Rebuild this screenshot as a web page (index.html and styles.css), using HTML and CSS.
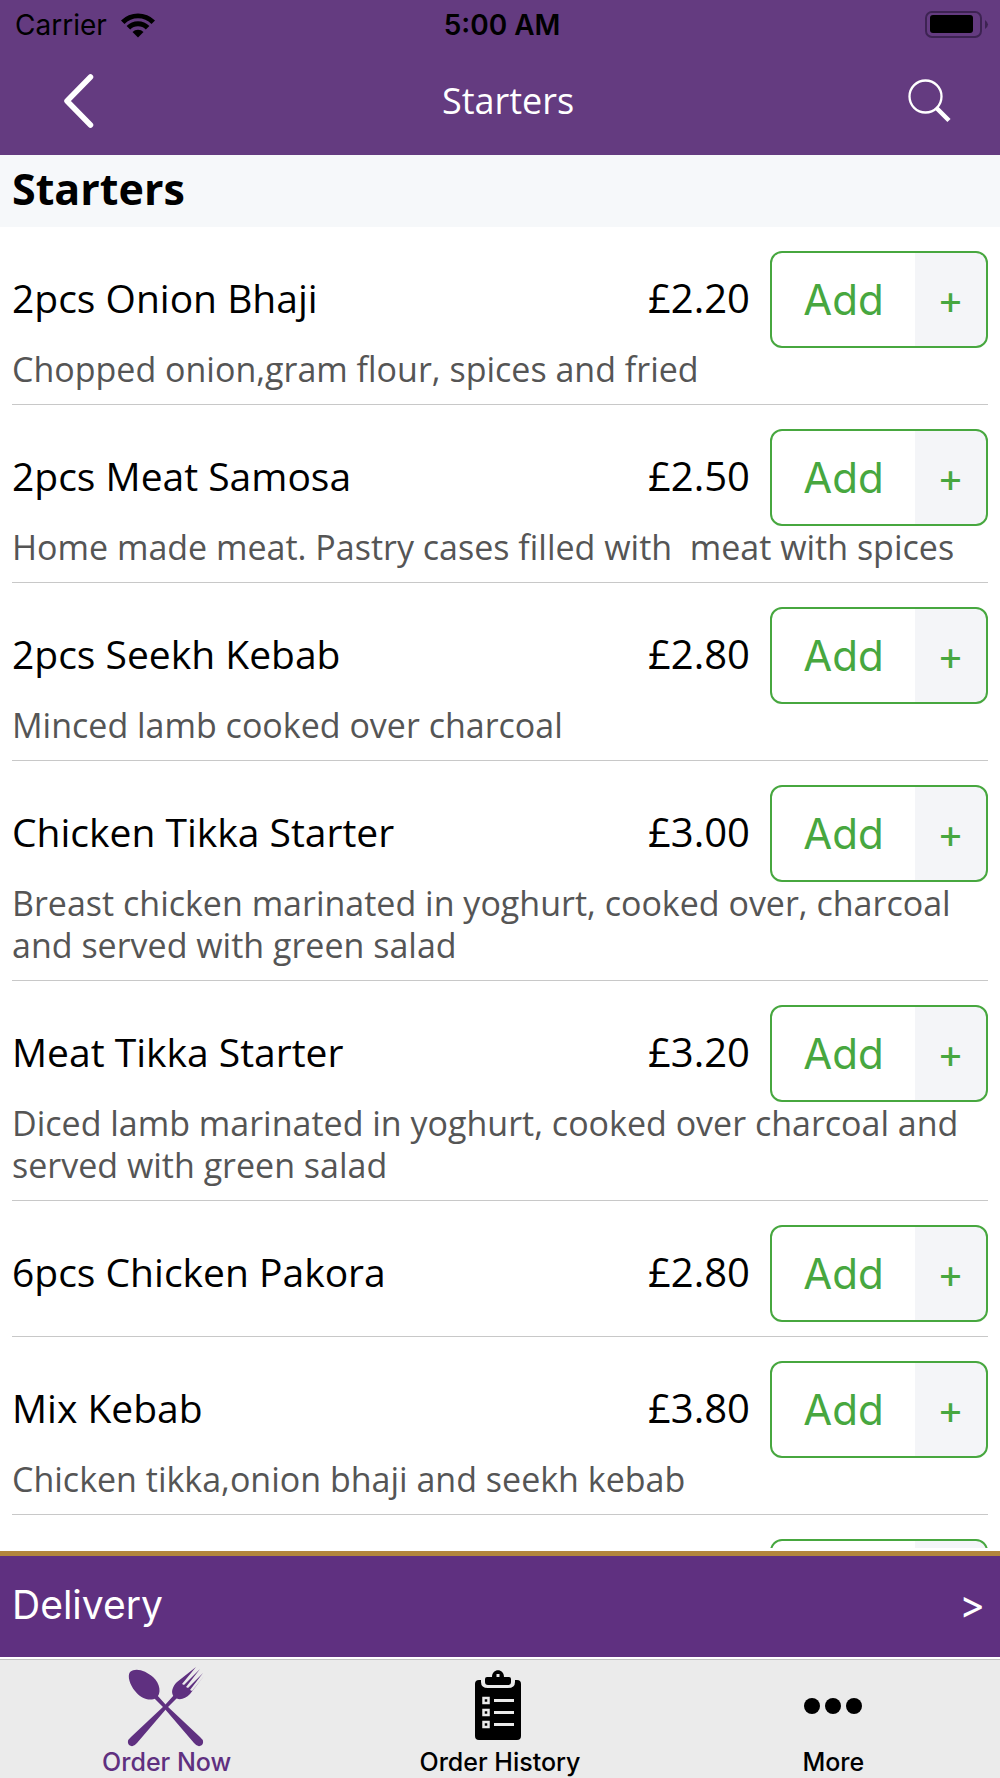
FILE: index.html
```
<!DOCTYPE html>
<html lang="en">
<head>
    <meta charset="UTF-8">
    <meta name="viewport" content="width=device-width, initial-scale=1.0">
    <title>Starters</title>
    <link rel="stylesheet" href="styles.css">
</head>
<body>
    <header class="header">
        <div class="status-bar">
            <div class="status-left">
                <span>Carrier</span>
                <svg class="wifi" viewBox="0 0 34 25">
                    <path d="M0 7.500A24 24 0 0 1 34 7.500L30.500 11A19 19 0 0 0 3.500 11Z"/>
                    <path d="M5.600 13A16.200 16.200 0 0 1 28.400 13L24.800 16.600A11 11 0 0 0 9.200 16.600Z"/>
                    <path d="M11.500 19A7.800 7.800 0 0 1 22.500 19L17 24.500Z"/>
                </svg>
            </div>
            <div class="status-time">5:00 AM</div>
            <div class="status-right">
                <svg class="battery" viewBox="0 0 64 28">
                    <rect x="1" y="1" width="55" height="25" rx="6" fill="none" stroke="#3d2352" stroke-width="2"/>
                    <rect x="5" y="4" width="43" height="18" rx="3"/>
                    <path d="M60 9Q66 13.500 60 18Z" fill="#3d2352"/>
                </svg>
            </div>
        </div>
        <div class="nav-bar">
            <button class="nav-btn back-btn" aria-label="Back">
                <svg width="30" height="54" viewBox="0 0 30 54"><path d="M26.500 3L3 27L26.500 51" fill="none" stroke="#fff" stroke-width="5.500" stroke-linecap="round" stroke-linejoin="round"/></svg>
            </button>
            <div class="nav-title">Starters</div>
            <button class="nav-btn search-btn" aria-label="Search">
                <svg width="44" height="44" viewBox="0 0 44 44"><circle cx="17.500" cy="17.500" r="16" fill="none" stroke="#fff" stroke-width="2.300"/><path d="M28 28.500L41 41.500" stroke="#fff" stroke-width="4.500"/></svg>
            </button>
        </div>
    </header>

    <h1 class="section-title">Starters</h1>

    <ul class="menu-list">
        <li class="menu-item">
            <div class="item-row">
                <h2 class="item-name">2pcs Onion Bhaji</h2>
                <span class="item-price">£2.20</span>
                <button class="add-btn"><span class="add-label">Add</span><span class="add-plus">+</span></button>
            </div>
            <p class="item-desc">Chopped onion,gram flour, spices and fried</p>
        </li>
        <li class="menu-item">
            <div class="item-row">
                <h2 class="item-name">2pcs Meat Samosa</h2>
                <span class="item-price">£2.50</span>
                <button class="add-btn"><span class="add-label">Add</span><span class="add-plus">+</span></button>
            </div>
            <p class="item-desc">Home made meat. Pastry cases filled with&nbsp; meat with spices</p>
        </li>
        <li class="menu-item">
            <div class="item-row">
                <h2 class="item-name">2pcs Seekh Kebab</h2>
                <span class="item-price">£2.80</span>
                <button class="add-btn"><span class="add-label">Add</span><span class="add-plus">+</span></button>
            </div>
            <p class="item-desc">Minced lamb cooked over charcoal</p>
        </li>
        <li class="menu-item">
            <div class="item-row">
                <h2 class="item-name">Chicken Tikka Starter</h2>
                <span class="item-price">£3.00</span>
                <button class="add-btn"><span class="add-label">Add</span><span class="add-plus">+</span></button>
            </div>
            <p class="item-desc">Breast chicken marinated in yoghurt, cooked over, charcoal and served with green salad</p>
        </li>
        <li class="menu-item">
            <div class="item-row">
                <h2 class="item-name">Meat Tikka Starter</h2>
                <span class="item-price">£3.20</span>
                <button class="add-btn"><span class="add-label">Add</span><span class="add-plus">+</span></button>
            </div>
            <p class="item-desc">Diced lamb marinated in yoghurt, cooked over charcoal and served with green salad</p>
        </li>
        <li class="menu-item">
            <div class="item-row">
                <h2 class="item-name">6pcs Chicken Pakora</h2>
                <span class="item-price">£2.80</span>
                <button class="add-btn"><span class="add-label">Add</span><span class="add-plus">+</span></button>
            </div>
        </li>
        <li class="menu-item">
            <div class="item-row">
                <h2 class="item-name">Mix Kebab</h2>
                <span class="item-price">£3.80</span>
                <button class="add-btn"><span class="add-label">Add</span><span class="add-plus">+</span></button>
            </div>
            <p class="item-desc">Chicken tikka,onion bhaji and seekh kebab</p>
        </li>
        <!-- next item, only its top edge shows above the delivery bar -->
        <li class="menu-item">
            <div class="item-row">
                <button class="add-btn" aria-label="Add"></button>
            </div>
        </li>
    </ul>

    <button class="delivery-bar"><span>Delivery</span><span class="delivery-arrow">&gt;</span></button>

    <nav class="tab-bar">
        <a href="#" class="tab active">
            <svg class="tab-icon" viewBox="0 0 80 80" fill="currentColor">
                <path d="M3 5C9 0 19 4 26 10C33 16 35 27 29 31C23 35 13 31 8 24C3 18 0 9 3 5Z"/>
                <path d="M27 31L30 28L39 38L73 70Q78 74 75 78Q71 81 67 76L37 41Z"/>
                <path d="M50 31L47 28L38 38L4 70Q-1 74 2 78Q6 81 10 76L40 41Z"/>
                <path d="M47 30C43 25 46 19 50 15L69 0L55 17L57 18L73 2L59 20L61 21L76 6L63 23L65 24L77 9L63 27C58 32 52 34 47 30Z"/>
            </svg>
            <span>Order Now</span>
        </a>
        <a href="#" class="tab">
            <svg class="tab-icon" viewBox="1 -2 80 80">
                <path d="M20 11H22V13Q22 19 29 19H49Q56 19 56 13V11H58Q62 11 62 15V67Q62 71 58 71H20Q16 71 16 67V15Q16 11 20 11Z"/>
                <path fill-rule="evenodd" d="M28 8H33C33 -1 45 -1 45 8H50Q52 8 52 10V13Q52 16 49 16H29Q26 16 26 13V10Q26 8 28 8ZM37.500 5H40.500V8H37.500Z"/>
                <path d="M24.500 29H29.500V34H24.500ZM24.500 41H29.500V46H24.500ZM24.500 53H29.500V58H24.500Z" fill="none" stroke="#ebebeb" stroke-width="2.500"/>
                <path d="M35 31.500H55M35 43.500H55M35 55.500H55" stroke="#ebebeb" stroke-width="3"/>
            </svg>
            <span>Order History</span>
        </a>
        <a href="#" class="tab">
            <svg class="tab-icon" viewBox="0 0 80 80">
                <circle cx="19" cy="39" r="8"/>
                <circle cx="40" cy="39" r="8"/>
                <circle cx="61" cy="39" r="8"/>
            </svg>
            <span>More</span>
        </a>
    </nav>
</body>
</html>
```

FILE: styles.css
```
/* General styling */
* {
    box-sizing: border-box;
}

body {
    margin: 0;
    height: 100vh;
    display: flex;
    flex-direction: column;
    font-family: 'Open Sans', sans-serif;
    background-color: #fff;
    color: #000;
}

button {
    font: inherit;
    border: none;
    padding: 0;
    cursor: pointer;
}

/* Header */
.header {
    background-color: #643b80;
    flex: none;
}

.status-bar {
    display: flex;
    align-items: center;
    height: 50px;
    padding: 0 11px 0 15px;
    font-family: 'Inter', sans-serif;
    font-size: 28px;
}

.status-left,
.status-right {
    flex: 1;
    display: flex;
    align-items: center;
    gap: 14px;
}

.status-right {
    justify-content: flex-end;
}

.status-time {
    font-weight: 600;
}

.wifi {
    width: 34px;
    height: 25px;
}

.battery {
    width: 64px;
    height: 28px;
}

.nav-bar {
    display: flex;
    align-items: center;
    justify-content: space-between;
    height: 105px;
    padding: 0 48px 4px 64px;
    color: #fff;
}

.nav-btn {
    display: flex;
    align-items: center;
    width: 60px;
    height: 60px;
    background: none;
}

.search-btn {
    justify-content: flex-end;
}

.nav-title {
    font-size: 36px;
}

/* Menu list */
.section-title {
    flex: none;
    margin: 0;
    height: 72px;
    padding: 0 12px;
    font-size: 43px;
    line-height: 68px;
    background-color: #f6f8fa;
}

.menu-list {
    flex: 1;
    min-height: 0;
    margin: 0 0 3px;
    padding: 0 12px;
    list-style: none;
    overflow: hidden;
}

.menu-item {
    padding: 24px 0 14px;
    border-bottom: 1px solid #c8c8c8;
}

.item-row {
    display: flex;
    align-items: center;
    justify-content: flex-end;
    height: 97px;
}

.item-name,
.item-price {
    margin: 0;
    padding-bottom: 4px;
    font-size: 39px;
    font-weight: normal;
    line-height: 52px;
}

.item-name {
    flex: 1;
}

.item-price {
    margin-right: 20px;
    font-size: 40px;
}

.item-desc {
    margin: 0;
    font-size: 34px;
    line-height: 42px;
    color: #555;
}

.add-btn {
    display: flex;
    width: 218px;
    height: 97px;
    border: 2px solid #47a73f;
    border-radius: 12px;
    overflow: hidden;
    background: linear-gradient(to right, #fff 143px, #f4f5f8 143px);
    color: #47a73f;
    font-family: 'Inter', sans-serif;
    line-height: 93px;
}

.add-label {
    width: 143px;
    font-size: 42px;
}

.add-plus {
    flex: 1;
    font-size: 40px;
}

/* Delivery bar */
.delivery-bar {
    flex: none;
    display: flex;
    align-items: center;
    justify-content: space-between;
    height: 106px;
    padding: 0 15px 4px 12px;
    border-top: 5px solid #b3853c;
    background-color: #5f3080;
    color: #fff;
    font-family: 'Inter', sans-serif;
    font-size: 39px;
}

/* Bottom tabs */
.tab-bar {
    flex: none;
    display: flex;
    height: 119px;
    margin-top: 2px;
    border-top: 1px solid #c0c0c0;
    background-color: #ebebeb;
}

.tab {
    flex: 1;
    display: flex;
    flex-direction: column;
    align-items: center;
    padding-top: 7px;
    color: #000;
    font-family: 'Inter', sans-serif;
    font-size: 25px;
    font-weight: 500;
    line-height: 30px;
    text-decoration: none;
}

.tab.active {
    color: #5f3080;
}

.tab-icon {
    width: 80px;
    height: 80px;
}
```
